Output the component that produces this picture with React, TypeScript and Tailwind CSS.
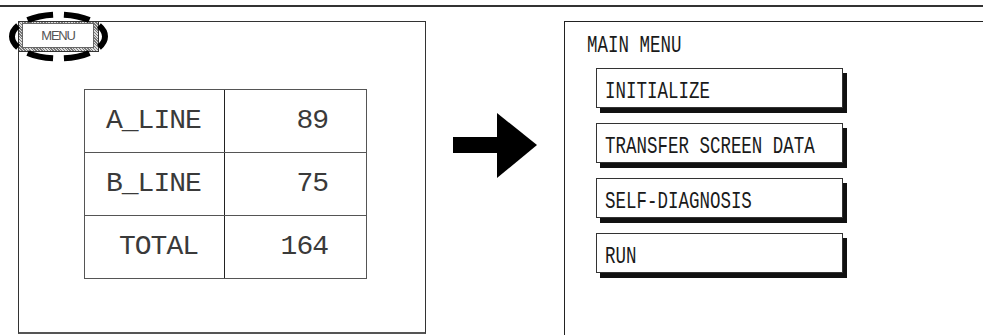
const rows = [
  { name: "A_LINE", value: "89", pad: "pl-[21px]" },
  { name: "B_LINE", value: "75", pad: "pl-[21px]" },
  { name: "TOTAL", value: "164", pad: "pl-[34px]" },
];

const menu = ["INITIALIZE", "TRANSFER SCREEN DATA", "SELF-DIAGNOSIS", "RUN"];

function Arrow() {
  return (
    <svg width="84" height="65" viewBox="0 0 84 65" className="ml-[27px] mt-[92px]">
      <rect x="0" y="24" width="45" height="16" fill="#000" />
      <polygon points="44,0 84,32 44,65" fill="#000" />
    </svg>
  );
}

export default function App() {
  return (
    <div className="relative w-[983px] h-[335px] overflow-hidden bg-white font-['Liberation_Mono',monospace]">
      <div className="mt-[5px] h-[2px] bg-[#333]" />

      <div className="mt-[14px] flex items-start pl-[18px]">
        {/* left screen */}
        <div className="w-[408px] h-[313px] shrink-0 border border-[#333] border-b-2 border-b-[#555]">
          <div className="-mt-px -ml-px w-[81px] h-[31px] border border-[#333] bg-[repeating-linear-gradient(45deg,#777_0_1px,#ddd_1px_2px)] pt-px pl-[3px] pr-[4px] pb-[3px]">
            <div className="h-full bg-white border border-[#666] flex items-center justify-center">
              <span className="font-['Liberation_Sans',sans-serif] text-[13px] leading-none tracking-[-1.2px] text-[#555]">
                MENU
              </span>
            </div>
          </div>

          <div className="ml-[65px] mt-[37px] w-[283px] border border-[#555] text-[28px] leading-none tracking-[-1px] text-[#3a3a3a]">
            {rows.map((r, i) => (
              <div
                key={r.name}
                className={`grid grid-cols-[140px_1fr] ${i < rows.length - 1 ? "border-b border-[#555]" : ""}`}
              >
                <div className={`h-[62px] flex items-center border-r border-[#222] ${r.pad}`}>
                  {r.name}
                </div>
                <div className="h-[62px] flex items-center justify-end pr-[38px]">{r.value}</div>
              </div>
            ))}
          </div>
        </div>

        <div className="w-[138px] shrink-0">
          <Arrow />
        </div>

        {/* right screen */}
        <div className="flex-1 h-[330px] border-l border-t border-[#222] text-[23px] leading-[22px] text-[#1a1a1a]">
          <div className="pt-[13px] pl-[22px]">
            <span className="inline-block origin-left scale-x-[0.76] whitespace-pre">MAIN MENU</span>
          </div>
          <div className="mt-[11px] ml-[31px] flex flex-col gap-[15px]">
            {menu.map((m) => (
              <div
                key={m}
                className="w-[247px] h-[40px] border border-[#333] bg-white shadow-[4px_5px_0_#111] pt-[12px] pl-[8px]"
              >
                <span className="inline-block origin-left scale-x-[0.76] whitespace-pre">{m}</span>
              </div>
            ))}
          </div>
        </div>
      </div>

      {/* dashed highlight around MENU */}
      <svg width="120" height="72" className="absolute left-0 top-0">
        <ellipse
          cx="58.5"
          cy="36.5"
          rx="46.5"
          ry="22"
          fill="none"
          stroke="#000"
          strokeWidth="6"
          pathLength={360}
          strokeDasharray="42 18"
          strokeDashoffset="21"
        />
      </svg>
    </div>
  );
}
